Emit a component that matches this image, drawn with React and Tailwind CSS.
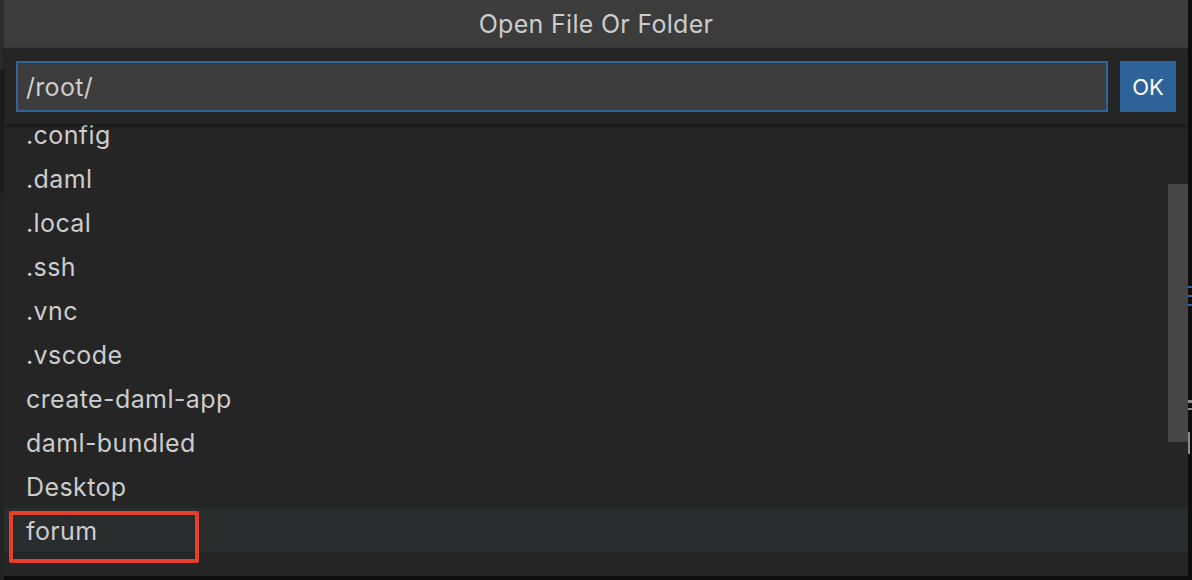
import React from "react";

const items = [
  ".config",
  ".daml",
  ".local",
  ".ssh",
  ".vnc",
  ".vscode",
  "create-daml-app",
  "daml-bundled",
  "Desktop",
  "forum",
];

export default function App() {
  return (
    <div
      className="relative w-[1192px] h-[580px] overflow-hidden bg-[#0e0e0e] flex"
      style={{ fontFamily: "Inter, 'Noto Sans', sans-serif" }}
    >
      {/* left strip of editor behind */}
      <div className="w-[4px] flex flex-col">
        <div className="h-[70px] bg-[#2c2c2c]" />
        <div className="h-[123px] bg-[#1d1d1d]" />
        <div className="flex-1 bg-[#222222]" />
      </div>

      {/* dialog */}
      <div className="w-[1184px] h-[576px] flex flex-col bg-[#252526]">
        <div className="h-[48px] bg-[#3c3c3c] flex items-center justify-center pt-[2px] text-[#cccccc] text-[25px] tracking-[0.3px]">
          Open File Or Folder
        </div>
        <div className="relative z-10 h-[76px] bg-[#252526] flex items-center gap-[12px] px-[12px] shadow-[0_2px_4px_rgba(0,0,0,0.45)]">
          <div className="flex-1 h-[51px] bg-[#3c3c3c] border-2 border-[#2f649a] flex items-center pl-[8px] pt-[3px] text-[#cccccc] text-[25px] tracking-[0.3px]">
            /root/
          </div>
          <div className="w-[56px] h-[51px] bg-[#2e6399] flex items-center justify-center pt-[2px] text-white text-[22px]">
            OK
          </div>
        </div>
        <div className="relative flex-1 overflow-hidden">
          <div className="-mt-[12px] flex flex-col">
            {items.map((it) => (
              <div
                key={it}
                className={
                  "h-[44px] flex items-center pl-[22px] pt-[3px] text-[#cccccc] text-[25px] tracking-[0.4px] " +
                  (it === "forum" ? "bg-[#2a2d2e]" : "")
                }
              >
                {it}
              </div>
            ))}
          </div>
          <div className="absolute right-0 top-[60px] w-[20px] h-[258px] bg-[#464646]" />
        </div>
      </div>

      {/* right strip of editor behind */}
      <div className="relative w-[4px] h-[580px] bg-[#0e0e0e] overflow-hidden">
        <div className="absolute left-0 top-[286px] w-[4px] h-[2px] bg-[#2f64a5]" />
        <div className="absolute left-0 top-[295px] w-[4px] h-[2px] bg-[#2f64a5]" />
        <div className="absolute left-0 top-[304px] w-[4px] h-[2px] bg-[#2f64a5]" />
        <div className="absolute left-0 top-[400px] w-[4px] h-[3px] bg-[#8a8a8a]" />
        <div className="absolute left-0 top-[408px] w-[4px] h-[2px] bg-[#8a8a8a]" />
        <div className="absolute left-0 top-[432px] w-[2px] h-[22px] bg-[#8a8a8a]" />
      </div>

      {/* red annotation */}
      <div className="absolute left-[9px] top-[511px] w-[190px] h-[52px] border-[4px] border-[#e5402a] rounded-[2px]" />
    </div>
  );
}
